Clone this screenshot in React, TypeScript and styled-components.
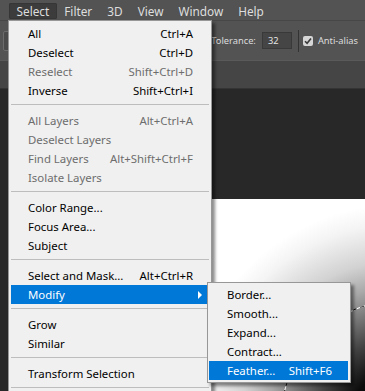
import React from 'react';
import styled, { createGlobalStyle } from 'styled-components';

const GlobalStyle = createGlobalStyle`
  html, body {
    margin: 0;
    padding: 0;
    background: #282828;
  }
`;

type Item = {
  label: string;
  shortcut?: string;
  disabled?: boolean;
};

const groups: Item[][] = [
  [
    { label: 'All', shortcut: 'Ctrl+A' },
    { label: 'Deselect', shortcut: 'Ctrl+D' },
    { label: 'Reselect', shortcut: 'Shift+Ctrl+D', disabled: true },
    { label: 'Inverse', shortcut: 'Shift+Ctrl+I' },
  ],
  [
    { label: 'All Layers', shortcut: 'Alt+Ctrl+A', disabled: true },
    { label: 'Deselect Layers', disabled: true },
    { label: 'Find Layers', shortcut: 'Alt+Shift+Ctrl+F', disabled: true },
    { label: 'Isolate Layers', disabled: true },
  ],
  [
    { label: 'Color Range...' },
    { label: 'Focus Area...' },
    { label: 'Subject' },
  ],
  [
    { label: 'Select and Mask...', shortcut: 'Alt+Ctrl+R' },
    { label: 'Modify' },
  ],
  [
    { label: 'Grow' },
    { label: 'Similar' },
  ],
  [
    { label: 'Transform Selection' },
  ],
];

const modifyItems: Item[] = [
  { label: 'Border...' },
  { label: 'Smooth...' },
  { label: 'Expand...' },
  { label: 'Contract...' },
  { label: 'Feather...', shortcut: 'Shift+F6' },
];

const topMenus = ['Select', 'Filter', '3D', 'View', 'Window', 'Help'];

export default function App() {
  return (
    <>
      <GlobalStyle />
      <Root>
        <MenuBar>
          {topMenus.map((m) => (
            <MenuBarItem key={m} $active={m === 'Select'}>{m}</MenuBarItem>
          ))}
        </MenuBar>
        <OptionsBar>
          <ToolPreset />
          <Spacer />
          <OptionLabel>Tolerance:</OptionLabel>
          <NumberField>32</NumberField>
          <Divider />
          <Checkbox>
            <svg width="8" height="8" viewBox="0 0 8 8">
              <path d="M1 4.2 L3.1 6.3 L7 1.6" fill="none" stroke="#3a3a3a" strokeWidth="1.6" />
            </svg>
          </Checkbox>
          <OptionLabel>Anti-alias</OptionLabel>
        </OptionsBar>
        <TabBar />
        <Pasteboard>
          <Canvas>
            <svg width="100%" height="100%" viewBox="0 0 215 191" preserveAspectRatio="none">
              <circle cx="250" cy="220" r="119" fill="none" stroke="#fff" strokeWidth="1" />
              <circle cx="250" cy="220" r="119" fill="none" stroke="#000" strokeWidth="1" strokeDasharray="4 4" />
            </svg>
          </Canvas>
        </Pasteboard>

        <Dropdown>
          {groups.map((group, gi) => (
            <React.Fragment key={gi}>
              {gi > 0 && <Separator />}
              {group.map((item) => {
                const isModify = item.label === 'Modify';
                return (
                  <MenuRow key={item.label} $disabled={item.disabled} $highlight={isModify}>
                    <span>{item.label}</span>
                    {item.shortcut && <span>{item.shortcut}</span>}
                    {isModify && <Arrow />}
                    {isModify && (
                      <SubMenu>
                        {modifyItems.map((sub) => (
                          <SubRow key={sub.label} $highlight={sub.label === 'Feather...'}>
                            <span>{sub.label}</span>
                            {sub.shortcut && <span>{sub.shortcut}</span>}
                          </SubRow>
                        ))}
                      </SubMenu>
                    )}
                  </MenuRow>
                );
              })}
            </React.Fragment>
          ))}
          <Separator />
        </Dropdown>
      </Root>
    </>
  );
}

const Root = styled.div`
  position: relative;
  width: 365px;
  height: 391px;
  overflow: hidden;
  display: flex;
  flex-direction: column;
  background: #282828;
  font-family: "Noto Sans", "Open Sans", sans-serif;
  font-size: 11.4px;
`;

const MenuBar = styled.div`
  height: 20px;
  flex: none;
  display: flex;
  align-items: center;
  padding-left: 9px;
  background: #535353;
  box-sizing: border-box;
`;

const MenuBarItem = styled.div<{ $active?: boolean }>`
  height: 16px;
  line-height: 16px;
  padding: 0 7.5px;
  margin-top: 2px;
  font-size: 11.8px;
  color: #dedede;
  border-radius: 2px;
  background: ${(p) => (p.$active ? '#3c3c3c' : 'transparent')};
  box-shadow: ${(p) => (p.$active ? 'inset 0 0 0 1px #363636' : 'none')};
`;

const OptionsBar = styled.div`
  height: 40px;
  flex: none;
  display: flex;
  align-items: center;
  padding: 0 7px 0 3px;
  font-size: 9.3px;
  background: #535353;
  border-top: 1px solid #474747;
  box-sizing: border-box;
`;

const ToolPreset = styled.div`
  width: 34px;
  height: 18px;
  border: 1px solid #6b6b6b;
  border-radius: 2px;
  background: #4a4a4a;
`;

const Spacer = styled.div`
  flex: 1;
`;

const OptionLabel = styled.span`
  color: #dcdcdc;
`;

const NumberField = styled.div`
  width: 30px;
  height: 17px;
  margin-left: 6px;
  padding-left: 5px;
  box-sizing: border-box;
  line-height: 15px;
  color: #e6e6e6;
  background: #454545;
  border: 1px solid #393939;
`;

const Divider = styled.div`
  width: 1px;
  height: 22px;
  margin: 0 4px 0 6px;
  background: #333333;
`;

const Checkbox = styled.div`
  width: 10px;
  height: 10px;
  margin-right: 5px;
  border-radius: 2px;
  background: #d6d6d6;
  display: flex;
  align-items: center;
  justify-content: center;
`;

const TabBar = styled.div`
  height: 29px;
  flex: none;
  background: #454545;
  border-top: 1px solid #5a5a5a;
  border-bottom: 1px solid #343434;
  box-sizing: border-box;
`;

const Pasteboard = styled.div`
  flex: 1;
  display: flex;
  flex-direction: column;
  padding: 110px 0 0 150px;
  background: #282828;
`;

const Canvas = styled.div`
  flex: 1;
  background: radial-gradient(
    circle at 250px 220px,
    #000 0px,
    #0c0c0c 50px,
    #444 82px,
    #a8a8a8 132px,
    #d2d2d2 158px,
    #f4f4f4 195px,
    #fff 215px
  );
  svg {
    display: block;
  }
`;

const Dropdown = styled.div`
  position: absolute;
  top: 20px;
  left: 8px;
  width: 204px;
  box-sizing: border-box;
  padding: 3px 4px 3px 2px;
  background: #f0f0f0;
  border: 1px solid #979797;
  box-shadow: 3px 3px 3px rgba(0, 0, 0, 0.45);
`;

const MenuRow = styled.div<{ $disabled?: boolean; $highlight?: boolean }>`
  position: relative;
  height: 19px;
  display: flex;
  align-items: center;
  justify-content: space-between;
  padding: 0 14px 0 17px;
  white-space: nowrap;
  color: ${(p) => (p.$highlight ? '#ffffff' : p.$disabled ? '#6d6d6d' : '#000000')};
  background: ${(p) => (p.$highlight ? '#0078d7' : 'transparent')};
`;

const Arrow = styled.span`
  width: 0;
  height: 0;
  margin-right: -9px;
  border-left: 4px solid #ffffff;
  border-top: 4px solid transparent;
  border-bottom: 4px solid transparent;
`;

const Separator = styled.div`
  height: 1px;
  margin: 4px -2px 6px 0;
  background: #bdbdbd;
`;

const SubMenu = styled.div`
  position: absolute;
  top: -3px;
  left: 100%;
  width: 144px;
  box-sizing: border-box;
  padding: 2px 2px 2px 1px;
  background: #f0f0f0;
  border: 1px solid #979797;
  box-shadow: 3px 3px 3px rgba(0, 0, 0, 0.45);
`;

const SubRow = styled.div<{ $highlight?: boolean }>`
  height: 19px;
  display: flex;
  align-items: center;
  justify-content: space-between;
  padding: 0 16px 0 18px;
  white-space: nowrap;
  color: ${(p) => (p.$highlight ? '#ffffff' : '#000000')};
  background: ${(p) => (p.$highlight ? '#0078d7' : 'transparent')};
`;
